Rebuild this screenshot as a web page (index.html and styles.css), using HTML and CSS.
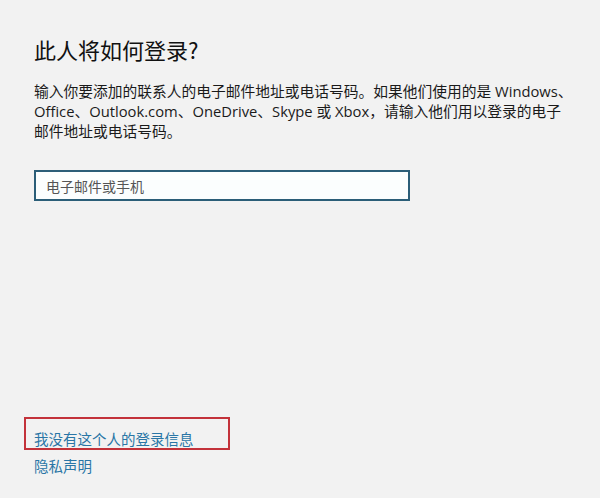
FILE: index.html
```html
<!DOCTYPE html>
<html lang="zh-CN">
<head>
<meta charset="utf-8">
<title>此人将如何登录?</title>
<link rel="stylesheet" href="styles.css">
</head>
<body>
<main class="page">
  <h1 class="title">此人将如何登录?</h1>
  <p class="desc">
    <span class="line">输入你要添加的联系人的电子邮件地址或电话号码。如果他们使用的是 Windows、</span>
    <span class="line">Office、Outlook.com、OneDrive、Skype 或 Xbox，请输入他们用以登录的电子</span>
    <span class="line">邮件地址或电话号码。</span>
  </p>
  <div class="field">
    <input class="input" type="text" placeholder="电子邮件或手机">
  </div>
  <div class="spacer"></div>
  <div class="links">
    <div class="highlight">
      <a class="link" href="#">我没有这个人的登录信息</a>
    </div>
    <a class="link privacy" href="#">隐私声明</a>
  </div>
</main>
</body>
</html>
```

FILE: styles.css
```css
html, body {
  margin: 0;
  padding: 0;
  background: #f2f2f2;
}
body {
  width: 600px;
  height: 498px;
  overflow: hidden;
  font-family: "Open Sans", "Noto Sans CJK SC", sans-serif;
  color: #1a1a1a;
}
.page {
  box-sizing: border-box;
  height: 498px;
  padding: 34px 0 0 34px;
  display: flex;
  flex-direction: column;
}
.title {
  margin: 0;
  font-family: "Noto Sans CJK SC", sans-serif;
  font-size: 22px;
  font-weight: 400;
  line-height: 30px;
  color: #111;
}
.desc {
  margin: 17px 0 0 0;
  font-size: 14.75px;
  line-height: 20px;
  color: #1a1a1a;
}
.line {
  display: block;
  white-space: nowrap;
}
.field {
  margin-top: 29px;
}
.input {
  box-sizing: border-box;
  width: 376px;
  height: 31px;
  margin: 0;
  padding: 0 10px;
  border: 2px solid #2b5e78;
  background: #fbfefe;
  font-family: "Noto Sans CJK SC", sans-serif;
  font-size: 14px;
  color: #333;
  outline: none;
}
.input::placeholder {
  color: #555;
}
.spacer {
  flex: 1;
}
.links {
  display: flex;
  flex-direction: column;
  align-items: flex-start;
  padding-bottom: 22px;
}
.link {
  font-family: "Noto Sans CJK SC", sans-serif;
  font-size: 14.5px;
  line-height: 20px;
  color: #2a76a6;
  text-decoration: none;
}
.highlight {
  box-sizing: border-box;
  margin-left: -10px;
  width: 206px;
  height: 33px;
  padding: 9px 0 0 8px;
  border: 2px solid #c3323a;
}
.privacy {
  margin-top: 6px;
}
```
